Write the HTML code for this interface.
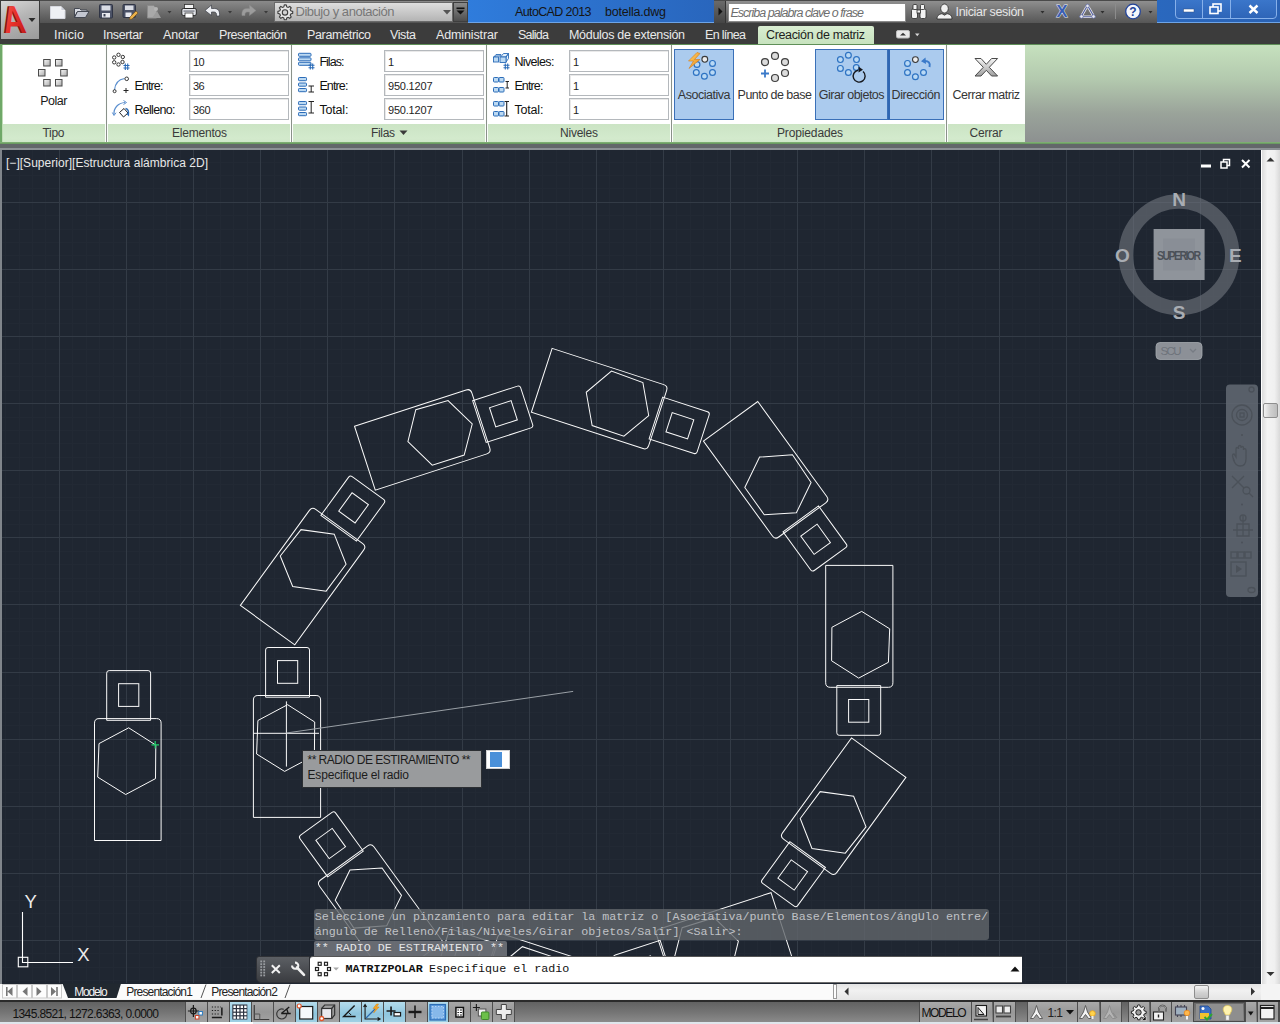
<!DOCTYPE html>
<html lang="es"><head><meta charset="utf-8"><title>AutoCAD 2013 botella.dwg</title>
<style>
html,body{margin:0;padding:0}
body{width:1280px;height:1024px;overflow:hidden;position:relative;background:#6d6f70;font-family:"Liberation Sans",sans-serif;font-size:12px;color:#222}
.abs{position:absolute}

</style></head>
<body>
<svg id="dw" width="1280" height="1024" viewBox="0 0 1280 1024" style="position:absolute;left:0;top:0"><defs><clipPath id="cp"><rect x="2" y="150" width="1259" height="833"/></clipPath></defs><rect x="0" y="150" width="1262" height="834" fill="#1f2631"/><rect x="0" y="150" width="2" height="850" fill="#80858b"/><g clip-path="url(#cp)"><path d="M5.60 150V984M19.02 150V984M32.45 150V984M45.87 150V984M72.73 150V984M86.15 150V984M99.58 150V984M113.00 150V984M139.86 150V984M153.28 150V984M166.71 150V984M180.13 150V984M206.99 150V984M220.41 150V984M233.84 150V984M247.26 150V984M274.12 150V984M287.54 150V984M300.97 150V984M314.39 150V984M341.25 150V984M354.67 150V984M368.10 150V984M381.52 150V984M408.38 150V984M421.80 150V984M435.23 150V984M448.65 150V984M475.51 150V984M488.93 150V984M502.36 150V984M515.78 150V984M542.64 150V984M556.06 150V984M569.49 150V984M582.91 150V984M609.77 150V984M623.19 150V984M636.62 150V984M650.04 150V984M676.90 150V984M690.32 150V984M703.75 150V984M717.17 150V984M744.03 150V984M757.45 150V984M770.88 150V984M784.30 150V984M811.16 150V984M824.58 150V984M838.01 150V984M851.43 150V984M878.29 150V984M891.71 150V984M905.14 150V984M918.56 150V984M945.42 150V984M958.84 150V984M972.27 150V984M985.69 150V984M1012.55 150V984M1025.97 150V984M1039.40 150V984M1052.82 150V984M1079.68 150V984M1093.10 150V984M1106.53 150V984M1119.95 150V984M1146.81 150V984M1160.23 150V984M1173.66 150V984M1187.08 150V984M1213.94 150V984M1227.36 150V984M1240.79 150V984M1254.21 150V984M0 162.04H1262M0 175.46H1262M0 188.88H1262M0 215.72H1262M0 229.14H1262M0 242.56H1262M0 255.98H1262M0 282.82H1262M0 296.24H1262M0 309.66H1262M0 323.08H1262M0 349.92H1262M0 363.34H1262M0 376.76H1262M0 390.18H1262M0 417.02H1262M0 430.44H1262M0 443.86H1262M0 457.28H1262M0 484.12H1262M0 497.54H1262M0 510.96H1262M0 524.38H1262M0 551.22H1262M0 564.64H1262M0 578.06H1262M0 591.48H1262M0 618.32H1262M0 631.74H1262M0 645.16H1262M0 658.58H1262M0 685.42H1262M0 698.84H1262M0 712.26H1262M0 725.68H1262M0 752.52H1262M0 765.94H1262M0 779.36H1262M0 792.78H1262M0 819.62H1262M0 833.04H1262M0 846.46H1262M0 859.88H1262M0 886.72H1262M0 900.14H1262M0 913.56H1262M0 926.98H1262M0 953.82H1262M0 967.24H1262M0 980.66H1262" stroke="#222934" stroke-width="1" fill="none" shape-rendering="crispEdges"/><path d="M59.30 150V984M126.43 150V984M193.56 150V984M260.69 150V984M327.82 150V984M394.95 150V984M462.08 150V984M529.21 150V984M596.34 150V984M663.47 150V984M730.60 150V984M797.73 150V984M864.86 150V984M931.99 150V984M999.12 150V984M1066.25 150V984M1133.38 150V984M1200.51 150V984M0 202.30H1262M0 269.40H1262M0 336.50H1262M0 403.60H1262M0 470.70H1262M0 537.80H1262M0 604.90H1262M0 672.00H1262M0 739.10H1262M0 806.20H1262M0 873.30H1262M0 940.40H1262" stroke="#333b46" stroke-width="1" fill="none" shape-rendering="crispEdges"/><g fill="none" stroke="#fafafa" stroke-width="1"><path d="M94.5 840.5V723.1Q94.5 718.6 99 718.6H156.6Q161.1 718.6 161.1 723.1V840.5Z"/><path d="M106.7 720.3V673.1Q106.7 670.6 109.2 670.6H148.1Q150.6 670.6 150.6 673.1V720.3Z"/><rect x="118.6" y="683.7" width="20.2" height="22.7"/><polygon points="128.7,727.8 155.8,745.1 155.5,778.6 125.7,794.5 97.7,777.1 99,743.6"/><g transform="rotate(0 573.15 691.4)"><path d="M253.4 817.4V700Q253.4 695.5 257.9 695.5H316.1Q320.6 695.5 320.6 700V817.4Z"/><path d="M265.6 697.2V650Q265.6 647.5 268.1 647.5H307Q309.5 647.5 309.5 650V697.2Z"/><rect x="277.5" y="660.6" width="20.2" height="22.7"/><polygon points="287.6,704.7 314.7,722 314.4,755.5 284.6,771.4 256.6,754 257.9,720.5"/></g><g transform="rotate(36 573.15 691.4)"><path d="M253.4 817.4V700Q253.4 695.5 257.9 695.5H316.1Q320.6 695.5 320.6 700V817.4Z"/><path d="M265.6 697.2V650Q265.6 647.5 268.1 647.5H307Q309.5 647.5 309.5 650V697.2Z"/><rect x="277.5" y="660.6" width="20.2" height="22.7"/><polygon points="287.6,704.7 314.7,722 314.4,755.5 284.6,771.4 256.6,754 257.9,720.5"/></g><g transform="rotate(72 573.15 691.4)"><path d="M253.4 817.4V700Q253.4 695.5 257.9 695.5H316.1Q320.6 695.5 320.6 700V817.4Z"/><path d="M265.6 697.2V650Q265.6 647.5 268.1 647.5H307Q309.5 647.5 309.5 650V697.2Z"/><rect x="277.5" y="660.6" width="20.2" height="22.7"/><polygon points="287.6,704.7 314.7,722 314.4,755.5 284.6,771.4 256.6,754 257.9,720.5"/></g><g transform="rotate(108 573.15 691.4)"><path d="M253.4 817.4V700Q253.4 695.5 257.9 695.5H316.1Q320.6 695.5 320.6 700V817.4Z"/><path d="M265.6 697.2V650Q265.6 647.5 268.1 647.5H307Q309.5 647.5 309.5 650V697.2Z"/><rect x="277.5" y="660.6" width="20.2" height="22.7"/><polygon points="287.6,704.7 314.7,722 314.4,755.5 284.6,771.4 256.6,754 257.9,720.5"/></g><g transform="rotate(144 573.15 691.4)"><path d="M253.4 817.4V700Q253.4 695.5 257.9 695.5H316.1Q320.6 695.5 320.6 700V817.4Z"/><path d="M265.6 697.2V650Q265.6 647.5 268.1 647.5H307Q309.5 647.5 309.5 650V697.2Z"/><rect x="277.5" y="660.6" width="20.2" height="22.7"/><polygon points="287.6,704.7 314.7,722 314.4,755.5 284.6,771.4 256.6,754 257.9,720.5"/></g><g transform="rotate(180 573.15 691.4)"><path d="M253.4 817.4V700Q253.4 695.5 257.9 695.5H316.1Q320.6 695.5 320.6 700V817.4Z"/><path d="M265.6 697.2V650Q265.6 647.5 268.1 647.5H307Q309.5 647.5 309.5 650V697.2Z"/><rect x="277.5" y="660.6" width="20.2" height="22.7"/><polygon points="287.6,704.7 314.7,722 314.4,755.5 284.6,771.4 256.6,754 257.9,720.5"/></g><g transform="rotate(216 573.15 691.4)"><path d="M253.4 817.4V700Q253.4 695.5 257.9 695.5H316.1Q320.6 695.5 320.6 700V817.4Z"/><path d="M265.6 697.2V650Q265.6 647.5 268.1 647.5H307Q309.5 647.5 309.5 650V697.2Z"/><rect x="277.5" y="660.6" width="20.2" height="22.7"/><polygon points="287.6,704.7 314.7,722 314.4,755.5 284.6,771.4 256.6,754 257.9,720.5"/></g><g transform="rotate(252 573.15 691.4)"><path d="M253.4 817.4V700Q253.4 695.5 257.9 695.5H316.1Q320.6 695.5 320.6 700V817.4Z"/><path d="M265.6 697.2V650Q265.6 647.5 268.1 647.5H307Q309.5 647.5 309.5 650V697.2Z"/><rect x="277.5" y="660.6" width="20.2" height="22.7"/><polygon points="287.6,704.7 314.7,722 314.4,755.5 284.6,771.4 256.6,754 257.9,720.5"/></g><g transform="rotate(288 573.15 691.4)"><path d="M253.4 817.4V700Q253.4 695.5 257.9 695.5H316.1Q320.6 695.5 320.6 700V817.4Z"/><path d="M265.6 697.2V650Q265.6 647.5 268.1 647.5H307Q309.5 647.5 309.5 650V697.2Z"/><rect x="277.5" y="660.6" width="20.2" height="22.7"/><polygon points="287.6,704.7 314.7,722 314.4,755.5 284.6,771.4 256.6,754 257.9,720.5"/></g><g transform="rotate(324 573.15 691.4)"><path d="M253.4 817.4V700Q253.4 695.5 257.9 695.5H316.1Q320.6 695.5 320.6 700V817.4Z"/><path d="M265.6 697.2V650Q265.6 647.5 268.1 647.5H307Q309.5 647.5 309.5 650V697.2Z"/><rect x="277.5" y="660.6" width="20.2" height="22.7"/><polygon points="287.6,704.7 314.7,722 314.4,755.5 284.6,771.4 256.6,754 257.9,720.5"/></g><path d="M253.4 733.3H319M286.4 701.4V766.6"/></g><line x1="286.4" y1="733" x2="573.15" y2="691.4" stroke="#9aa0a6" stroke-width="1"/><path d="M151.5 744.8H159M155.2 741V748.6" stroke="#1fd06a" stroke-width="1.2"/><g fill="none" stroke="#fff" stroke-width="1.1"><path d="M22.5 912V962.5H73"/><rect x="18.3" y="957.3" width="9.5" height="9.5"/></g><g fill="#ececec" font-family="Liberation Sans,sans-serif" font-size="18.5"><text x="24.4" y="908.2">Y</text><text x="77.2" y="961.2">X</text></g></g></svg>
<div class="abs" style="left:0px;top:0px;width:1280px;height:23px;background:linear-gradient(#8a8a8a 0%,#707070 45%,#525252 100%);border-top:1px solid #4a4a4a;box-sizing:border-box"></div>
<div class="abs" style="left:0px;top:23px;width:1280px;height:21px;background:#3c3c3c"></div>
<div class="abs" style="left:468px;top:0px;width:246px;height:23px;background:linear-gradient(90deg,#2f7cdc,#2966bd);border-bottom:1px solid #6ea4e6;box-sizing:border-box"></div>
<div class="abs" style="left:1157px;top:0px;width:123px;height:23px;background:linear-gradient(90deg,#2a68be,#2a62b4);border-bottom:1px solid #6ea4e6;box-sizing:border-box"></div>
<div class="abs" style="left:515px;top:2px;height:20px;line-height:20px;font-size:12.5px;color:#151515;white-space:nowrap;letter-spacing:-0.626px;">AutoCAD 2013</div>
<div class="abs" style="left:605px;top:2px;height:20px;line-height:20px;font-size:12.5px;color:#151515;white-space:nowrap;letter-spacing:-0.224px;">botella.dwg</div>
<div class="abs" style="left:0px;top:0px;width:40px;height:40px;background:linear-gradient(160deg,#d6d6d6 0%,#b4b4b4 45%,#9a9a9a 100%);border:1px solid #3a3a3a;box-sizing:border-box"></div>
<svg class="abs" style="left:0;top:0" width="40" height="40" viewBox="0 0 40 40">
<defs><linearGradient id="ag" x1="0" y1="0" x2="1" y2="1"><stop offset="0" stop-color="#f66a5e"/><stop offset=".5" stop-color="#e8302a"/><stop offset="1" stop-color="#b41414"/></linearGradient></defs>
<g font-family="'Liberation Sans',sans-serif" font-weight="bold" font-size="39" transform="translate(4.8 32.5) skewX(9) scale(.8 1)"><text x="-2" y=".5" fill="#8a0e0f">A</text><text x="0" y="0" fill="url(#ag)">A</text></g>
<path d="M28.5 18h7l-3.5 4z" fill="#2b2b2b"/></svg>
<svg class="abs" style="left:44px;top:0" width="230" height="23" viewBox="44 0 230 23">
<g>
<path d="M50.5 6.5h10.5l4 4v8h-14.5z" fill="#eef0f4" stroke="#d5d7de" stroke-width="1"/><path d="M61 6.5v4h4" fill="#c9ccd6" stroke="#f8f8f8" stroke-width=".8"/>
<path d="M74.5 8.5h5l1.5 1.5h6v2h-10l-2.5 5.5z" fill="#d8dbe2" stroke="#3b3f4a" stroke-width=".9"/><path d="M74.5 17.5l3-6h11.5l-3.5 6z" fill="#c3c7d1" stroke="#3b3f4a" stroke-width=".9"/>
<rect x="99.5" y="4.5" width="13" height="13.5" rx="1" fill="#4b5266" stroke="#2f3444"/><rect x="101.5" y="5.5" width="9" height="5" fill="#d9dce4"/><rect x="102" y="13" width="8" height="4.5" fill="#e8eaf0"/><rect x="103.5" y="14" width="2" height="2.5" fill="#3c4254"/>
<rect x="123" y="4.5" width="12.5" height="13" rx="1" fill="#4b5266" stroke="#2f3444"/><rect x="125" y="5.5" width="8.5" height="4.5" fill="#d9dce4"/><rect x="125.5" y="12.5" width="6" height="4.5" fill="#e8eaf0"/><path d="M130 17l6-6 2 2-6 6-2.5.5z" fill="#e8b04a" stroke="#6b4a17" stroke-width=".6"/>
<path d="M147.5 5.5h6l3 3v9.5h-9z" fill="#a9a9a9" stroke="#8c8c8c"/><path d="M152 18l5-7 4 7z" fill="#9c9c9c"/><circle cx="156" cy="9" r="2" fill="#b5b5b5"/>
<path d="M167.5 11h4l-2 2.5z" fill="#3a3a3a"/>
<rect x="184.5" y="4.5" width="9" height="5" fill="#f4f4f4" stroke="#333" stroke-width=".8"/><rect x="181.8" y="8.5" width="14.5" height="7" rx="1.5" fill="#e3e5ea" stroke="#2b2b2b"/><rect x="185" y="13" width="8" height="5" fill="#fff" stroke="#333" stroke-width=".8"/><rect x="183.5" y="10.3" width="11" height="1.6" fill="#8a8d96"/>
<path d="M205 10.5l6.5-5.5v3.5h3c4 0 5.5 3 5 7.5h-3c.3-2.5-.5-4-2.5-4h-2.5v3.5z" fill="#eceef2" stroke="#3c3f48" stroke-width=".7"/>
<path d="M228 11h4l-2 2.5z" fill="#3a3a3a"/>
<path d="M256 10.5l-6.5-5.5v3.5h-3c-3.5 0-5 3-4.5 7h3c-.3-2.3.4-3.5 2.3-3.5h2.2v3.5z" fill="#9c9c9c" stroke="#8a8a8a" stroke-width=".5"/>
<path d="M264 11h4l-2 2.5z" fill="#3a3a3a"/>
</g></svg>
<div class="abs" style="left:273.5px;top:2px;width:179px;height:20px;background:linear-gradient(#dedede,#c9c9c9 50%,#b4b4b4);border:1px solid #6a6a6a;box-sizing:border-box"></div>
<svg class="abs" style="left:276px;top:3px" width="18" height="18" viewBox="0 0 18 18"><path d="M9 1.8l1.3.2.5 1.9 1.3.6 1.7-1 1.4 1.4-1 1.7.6 1.3 1.9.5v2l-1.9.5-.6 1.3 1 1.7-1.4 1.4-1.7-1-1.3.6-.5 1.9h-2l-.5-1.9-1.3-.6-1.7 1-1.4-1.4 1-1.7-.6-1.3-1.9-.5v-2l1.9-.5.6-1.3-1-1.7 1.4-1.4 1.7 1 1.3-.6.5-1.9z" fill="#e6e6e6" stroke="#3d3d3d" stroke-width="1.1"/><circle cx="9" cy="9.4" r="2.7" fill="#d2d2d2" stroke="#3d3d3d" stroke-width="1.1"/></svg>
<div class="abs" style="left:295.5px;top:2px;height:20px;line-height:20px;font-size:13px;color:#777;white-space:nowrap;letter-spacing:-0.468px;">Dibujo y anotación</div>
<svg class="abs" style="left:440px;top:8px" width="30" height="10" viewBox="0 0 30 10"><path d="M3 2h8l-4 4.5z" fill="#555"/></svg>
<div class="abs" style="left:453px;top:2px;width:14.5px;height:20px;background:linear-gradient(#8a8a8a,#4e4e4e);border:1px solid #3e3e3e;box-sizing:border-box"></div>
<svg class="abs" style="left:453px;top:2px" width="15" height="20" viewBox="0 0 15 20"><rect x="3.5" y="5.5" width="8" height="1.6" fill="#111"/><path d="M3.5 8.5h8l-4 4z" fill="#111"/></svg>
<div class="abs" style="left:714px;top:0px;width:443px;height:23px;background:linear-gradient(#8f8f8f 0%,#747474 45%,#565656 100%);border-top:1px solid #4a4a4a;box-sizing:border-box"></div>
<div class="abs" style="left:714px;top:1px;width:12px;height:22px;background:linear-gradient(#6a6a6a,#454545);border-right:1px solid #333;box-sizing:border-box"></div>
<svg class="abs" style="left:714px;top:0" width="12" height="23" viewBox="0 0 12 23"><path d="M4.5 7.5l4 4-4 4z" fill="#111"/></svg>
<div class="abs" style="left:727.5px;top:2.5px;width:178px;height:19.5px;background:#fff;border:1px solid #8a8a8a;box-sizing:border-box"></div>
<div class="abs" style="left:730.5px;top:2.8px;height:20px;line-height:20px;font-size:12.5px;color:#6e6e6e;white-space:nowrap;font-style:italic;letter-spacing:-0.989px;">Escriba palabra clave o frase</div>
<svg class="abs" style="left:908px;top:0" width="250" height="23" viewBox="908 0 250 23">
<g fill="#f2f2f2" stroke="#2a2a2a" stroke-width=".8"><rect x="911.5" y="9" width="6" height="9.5" rx="1.5"/><rect x="920" y="9" width="6" height="9.5" rx="1.5"/><rect x="913" y="4.5" width="4" height="5" rx="1"/><rect x="920.5" y="4.5" width="4" height="5" rx="1"/><rect x="917" y="10" width="3.5" height="3" /></g>
<g fill="#f0f0f0" stroke="#2a2a2a" stroke-width=".8"><ellipse cx="944.5" cy="8.5" rx="3.8" ry="4.5"/><path d="M937 19c0-4 3-5 5-5.3l2.5 1.5 2.5-1.5c2 .3 5 1.3 5 5.3z"/></g>
<path d="M1040.5 11h4l-2 2.5z" fill="#2e2e2e"/>
<text x="1056.5" y="17.3" font-family="'Liberation Sans',sans-serif" font-weight="bold" font-size="16.5" fill="#3a5fb4" stroke="#e8ecf6" stroke-width=".9" paint-order="stroke">X</text>
<path d="M1087.5 5.5l6.5 11.3h-13z" fill="none" stroke="#e9e9ee" stroke-width="2.6" stroke-linejoin="round"/><path d="M1087.5 5.5l6.5 11.3h-13z" fill="none" stroke="#5561a0" stroke-width="1.1" stroke-linejoin="round"/><circle cx="1087.5" cy="6" r="1.8" fill="#e9e9ee" stroke="#5561a0" stroke-width=".7"/><circle cx="1081.5" cy="16.5" r="1.8" fill="#e9e9ee" stroke="#5561a0" stroke-width=".7"/><circle cx="1093.5" cy="16.5" r="1.8" fill="#e9e9ee" stroke="#5561a0" stroke-width=".7"/>
<path d="M1100.5 11h4l-2 2.5z" fill="#2e2e2e"/>
<path d="M1115.5 4v15" stroke="#8c8c8c" stroke-width="1"/>
<circle cx="1133" cy="11.5" r="7.3" fill="#f4f6fb" stroke="#23449a" stroke-width="1.3"/>
<path d="M1148.5 11h4l-2 2.5z" fill="#2e2e2e"/>
</svg>
<div class="abs" style="left:1129.3px;top:1.8px;height:20px;line-height:20px;font-size:12px;color:#23449a;white-space:nowrap;font-weight:bold;">?</div>
<div class="abs" style="left:955.5px;top:2px;height:20px;line-height:20px;font-size:12.5px;color:#e6e6e6;white-space:nowrap;letter-spacing:-0.342px;">Iniciar sesión</div>
<div class="abs" style="left:1174.5px;top:-3px;width:102.5px;height:22px;border:1px solid #86b0ea;border-radius:0 0 4px 4px;box-sizing:border-box;background:linear-gradient(#3c78cc,#2e65b8)"></div>
<div class="abs" style="left:1202px;top:0px;width:1px;height:18px;background:#86b0ea"></div>
<div class="abs" style="left:1229.5px;top:0px;width:1px;height:18px;background:#86b0ea"></div>
<svg class="abs" style="left:1175px;top:0" width="102" height="20" viewBox="1175 0 102 20">
<rect x="1183.5" y="9" width="10.5" height="3" fill="#fff" stroke="#2d4f86" stroke-width=".5"/>
<rect x="1213" y="4" width="8" height="7" fill="none" stroke="#fff" stroke-width="1.6"/><rect x="1210" y="7" width="8" height="6.5" fill="#356ec2" stroke="#fff" stroke-width="1.6"/>
<path d="M1249.5 5.5l8 7.5M1257.5 5.5l-8 7.5" stroke="#fff" stroke-width="2.4"/>
</svg>
<div class="abs" style="left:54px;top:25.3px;height:20px;line-height:20px;font-size:12.5px;color:#eaeaea;white-space:nowrap;letter-spacing:0.164px;">Inicio</div>
<div class="abs" style="left:103px;top:25.3px;height:20px;line-height:20px;font-size:12.5px;color:#eaeaea;white-space:nowrap;letter-spacing:-0.34px;">Insertar</div>
<div class="abs" style="left:163px;top:25.3px;height:20px;line-height:20px;font-size:12.5px;color:#eaeaea;white-space:nowrap;letter-spacing:-0.166px;">Anotar</div>
<div class="abs" style="left:219px;top:25.3px;height:20px;line-height:20px;font-size:12.5px;color:#eaeaea;white-space:nowrap;letter-spacing:-0.451px;">Presentación</div>
<div class="abs" style="left:307px;top:25.3px;height:20px;line-height:20px;font-size:12.5px;color:#eaeaea;white-space:nowrap;letter-spacing:-0.338px;">Paramétrico</div>
<div class="abs" style="left:390px;top:25.3px;height:20px;line-height:20px;font-size:12.5px;color:#eaeaea;white-space:nowrap;letter-spacing:-0.391px;">Vista</div>
<div class="abs" style="left:436px;top:25.3px;height:20px;line-height:20px;font-size:12.5px;color:#eaeaea;white-space:nowrap;letter-spacing:-0.121px;">Administrar</div>
<div class="abs" style="left:518px;top:25.3px;height:20px;line-height:20px;font-size:12.5px;color:#eaeaea;white-space:nowrap;letter-spacing:-0.749px;">Salida</div>
<div class="abs" style="left:569px;top:25.3px;height:20px;line-height:20px;font-size:12.5px;color:#eaeaea;white-space:nowrap;letter-spacing:-0.295px;">Módulos de extensión</div>
<div class="abs" style="left:705px;top:25.3px;height:20px;line-height:20px;font-size:12.5px;color:#eaeaea;white-space:nowrap;letter-spacing:-0.695px;">En línea</div>
<div class="abs" style="left:758px;top:26px;width:116px;height:19px;background:linear-gradient(#d9edd2,#c6e2bd);border-radius:2px 2px 0 0"></div>
<div class="abs" style="left:766px;top:25.3px;height:20px;line-height:20px;font-size:12.5px;color:#1e1e1e;white-space:nowrap;letter-spacing:-0.347px;">Creación de matriz</div>
<svg class="abs" style="left:894px;top:26px" width="32" height="16" viewBox="0 0 32 16"><rect x="2.5" y="4.5" width="13" height="7.5" rx="1.5" fill="#e9e9e9" stroke="#bdbdbd"/><path d="M6 9.5l3-2.8 3 2.8z" fill="#333"/><path d="M21 7.5h4.5l-2.25 2.8z" fill="#d8d8d8"/></svg>
<div class="abs" style="left:0px;top:44px;width:1280px;height:100px;background:#bfdcb6"></div>
<div class="abs" style="left:0px;top:43.5px;width:1280px;height:1.5px;background:#5f8f58"></div>
<div class="abs" style="left:1025px;top:45px;width:255px;height:97.5px;background:linear-gradient(#c6e1be 0%,#b3c9ae 35%,#9aa39a 70%,#8c9090 100%)"></div>
<div class="abs" style="left:3px;top:45px;width:102.5px;height:79px;background:#fff"></div>
<div class="abs" style="left:3px;top:124px;width:102.5px;height:17.5px;background:linear-gradient(#cbe4c4,#d3eacd 80%,#cfe7c8)"></div>
<div class="abs" style="left:107px;top:45px;width:183.5px;height:79px;background:#fff"></div>
<div class="abs" style="left:107px;top:124px;width:183.5px;height:17.5px;background:linear-gradient(#cbe4c4,#d3eacd 80%,#cfe7c8)"></div>
<div class="abs" style="left:292px;top:45px;width:194px;height:79px;background:#fff"></div>
<div class="abs" style="left:292px;top:124px;width:194px;height:17.5px;background:linear-gradient(#cbe4c4,#d3eacd 80%,#cfe7c8)"></div>
<div class="abs" style="left:487.5px;top:45px;width:183.5px;height:79px;background:#fff"></div>
<div class="abs" style="left:487.5px;top:124px;width:183.5px;height:17.5px;background:linear-gradient(#cbe4c4,#d3eacd 80%,#cfe7c8)"></div>
<div class="abs" style="left:672.5px;top:45px;width:273.5px;height:79px;background:#fff"></div>
<div class="abs" style="left:672.5px;top:124px;width:273.5px;height:17.5px;background:linear-gradient(#cbe4c4,#d3eacd 80%,#cfe7c8)"></div>
<div class="abs" style="left:947.5px;top:45px;width:77px;height:79px;background:#fff"></div>
<div class="abs" style="left:947.5px;top:124px;width:77px;height:17.5px;background:linear-gradient(#cbe4c4,#d3eacd 80%,#cfe7c8)"></div>
<div class="abs" style="left:104.5px;top:45px;width:3px;height:96.5px;background:#fbfdfb"></div>
<div class="abs" style="left:105.5px;top:45px;width:1px;height:96.5px;background:#8a918a"></div>
<div class="abs" style="left:289.5px;top:45px;width:3px;height:96.5px;background:#fbfdfb"></div>
<div class="abs" style="left:290.5px;top:45px;width:1px;height:96.5px;background:#8a918a"></div>
<div class="abs" style="left:485px;top:45px;width:3px;height:96.5px;background:#fbfdfb"></div>
<div class="abs" style="left:486px;top:45px;width:1px;height:96.5px;background:#8a918a"></div>
<div class="abs" style="left:670px;top:45px;width:3px;height:96.5px;background:#fbfdfb"></div>
<div class="abs" style="left:671px;top:45px;width:1px;height:96.5px;background:#8a918a"></div>
<div class="abs" style="left:945px;top:45px;width:3px;height:96.5px;background:#fbfdfb"></div>
<div class="abs" style="left:946px;top:45px;width:1px;height:96.5px;background:#8a918a"></div>
<div class="abs" style="left:42.5px;top:122.5px;height:20px;line-height:20px;font-size:12px;color:#3a3a3a;white-space:nowrap;letter-spacing:-0.299px;">Tipo</div>
<div class="abs" style="left:172px;top:122.5px;height:20px;line-height:20px;font-size:12px;color:#3a3a3a;white-space:nowrap;letter-spacing:-0.212px;">Elementos</div>
<div class="abs" style="left:371px;top:122.5px;height:20px;line-height:20px;font-size:12px;color:#3a3a3a;white-space:nowrap;letter-spacing:-0.334px;">Filas</div>
<svg class="abs" style="left:398px;top:128px" width="12" height="10" viewBox="0 0 12 10"><path d="M1.5 2.5h8l-4 4.5z" fill="#3a3a3a"/></svg>
<div class="abs" style="left:560px;top:122.5px;height:20px;line-height:20px;font-size:12px;color:#3a3a3a;white-space:nowrap;letter-spacing:-0.224px;">Niveles</div>
<div class="abs" style="left:777px;top:122.5px;height:20px;line-height:20px;font-size:12px;color:#3a3a3a;white-space:nowrap;letter-spacing:-0.138px;">Propiedades</div>
<div class="abs" style="left:969.5px;top:122.5px;height:20px;line-height:20px;font-size:12px;color:#3a3a3a;white-space:nowrap;letter-spacing:-0.201px;">Cerrar</div>
<svg class="abs" style="left:30px;top:50px" width="50" height="45" viewBox="30 50 50 45"><defs><linearGradient id="sqg" x1="0" y1="0" x2="1" y2="1"><stop offset="0" stop-color="#fafafa"/><stop offset="1" stop-color="#a8a8a8"/></linearGradient></defs><rect x="43.7" y="59.5" width="6.5" height="6.5" fill="url(#sqg)" stroke="#4a4a4a" stroke-width="1"/><rect x="55.5" y="59.5" width="6.5" height="6.5" fill="url(#sqg)" stroke="#4a4a4a" stroke-width="1"/><rect x="38.5" y="69.5" width="6.5" height="6.5" fill="url(#sqg)" stroke="#4a4a4a" stroke-width="1"/><rect x="60.7" y="69.5" width="6.5" height="6.5" fill="url(#sqg)" stroke="#4a4a4a" stroke-width="1"/><rect x="43.7" y="79.5" width="6.5" height="6.5" fill="url(#sqg)" stroke="#4a4a4a" stroke-width="1"/><rect x="55.5" y="79.5" width="6.5" height="6.5" fill="url(#sqg)" stroke="#4a4a4a" stroke-width="1"/></svg>
<div class="abs" style="left:40.3px;top:90.5px;height:20px;line-height:20px;font-size:12.5px;color:#1a1a1a;white-space:nowrap;letter-spacing:-0.545px;">Polar</div>
<div class="abs" style="left:189px;top:50px;width:99.5px;height:21.6px;background:#fff;border:1px solid #b4b8bc;box-sizing:border-box;box-shadow:inset 1px 1px 0 #e9e9e9"></div><div class="abs" style="left:193px;top:51.9px;height:20px;line-height:20px;font-size:11px;color:#1e1e1e;white-space:nowrap;letter-spacing:-0.734px;">10</div>
<div class="abs" style="left:189px;top:74px;width:99.5px;height:21.6px;background:#fff;border:1px solid #b4b8bc;box-sizing:border-box;box-shadow:inset 1px 1px 0 #e9e9e9"></div><div class="abs" style="left:193px;top:75.9px;height:20px;line-height:20px;font-size:11px;color:#1e1e1e;white-space:nowrap;letter-spacing:-0.734px;">36</div>
<div class="abs" style="left:189px;top:98px;width:99.5px;height:21.6px;background:#fff;border:1px solid #b4b8bc;box-sizing:border-box;box-shadow:inset 1px 1px 0 #e9e9e9"></div><div class="abs" style="left:193px;top:99.9px;height:20px;line-height:20px;font-size:11px;color:#1e1e1e;white-space:nowrap;letter-spacing:-0.426px;">360</div>
<div class="abs" style="left:384px;top:50px;width:99.5px;height:21.6px;background:#fff;border:1px solid #b4b8bc;box-sizing:border-box;box-shadow:inset 1px 1px 0 #e9e9e9"></div><div class="abs" style="left:388px;top:51.9px;height:20px;line-height:20px;font-size:11px;color:#1e1e1e;white-space:nowrap;">1</div>
<div class="abs" style="left:384px;top:74px;width:99.5px;height:21.6px;background:#fff;border:1px solid #b4b8bc;box-sizing:border-box;box-shadow:inset 1px 1px 0 #e9e9e9"></div><div class="abs" style="left:388px;top:75.9px;height:20px;line-height:20px;font-size:11px;color:#1e1e1e;white-space:nowrap;letter-spacing:-0.197px;">950.1207</div>
<div class="abs" style="left:384px;top:98px;width:99.5px;height:21.6px;background:#fff;border:1px solid #b4b8bc;box-sizing:border-box;box-shadow:inset 1px 1px 0 #e9e9e9"></div><div class="abs" style="left:388px;top:99.9px;height:20px;line-height:20px;font-size:11px;color:#1e1e1e;white-space:nowrap;letter-spacing:-0.197px;">950.1207</div>
<div class="abs" style="left:569px;top:50px;width:99.5px;height:21.6px;background:#fff;border:1px solid #b4b8bc;box-sizing:border-box;box-shadow:inset 1px 1px 0 #e9e9e9"></div><div class="abs" style="left:573px;top:51.9px;height:20px;line-height:20px;font-size:11px;color:#1e1e1e;white-space:nowrap;">1</div>
<div class="abs" style="left:569px;top:74px;width:99.5px;height:21.6px;background:#fff;border:1px solid #b4b8bc;box-sizing:border-box;box-shadow:inset 1px 1px 0 #e9e9e9"></div><div class="abs" style="left:573px;top:75.9px;height:20px;line-height:20px;font-size:11px;color:#1e1e1e;white-space:nowrap;">1</div>
<div class="abs" style="left:569px;top:98px;width:99.5px;height:21.6px;background:#fff;border:1px solid #b4b8bc;box-sizing:border-box;box-shadow:inset 1px 1px 0 #e9e9e9"></div><div class="abs" style="left:573px;top:99.9px;height:20px;line-height:20px;font-size:11px;color:#1e1e1e;white-space:nowrap;">1</div>
<div class="abs" style="left:134.4px;top:75.8px;height:20px;line-height:20px;font-size:12.5px;color:#111;white-space:nowrap;letter-spacing:-0.87px;">Entre:</div>
<div class="abs" style="left:134.4px;top:99.8px;height:20px;line-height:20px;font-size:12.5px;color:#111;white-space:nowrap;letter-spacing:-0.694px;">Relleno:</div>
<div class="abs" style="left:319.4px;top:51.6px;height:20px;line-height:20px;font-size:12.5px;color:#111;white-space:nowrap;letter-spacing:-0.973px;">Filas:</div>
<div class="abs" style="left:319.4px;top:75.8px;height:20px;line-height:20px;font-size:12.5px;color:#111;white-space:nowrap;letter-spacing:-0.87px;">Entre:</div>
<div class="abs" style="left:319.4px;top:99.8px;height:20px;line-height:20px;font-size:12.5px;color:#111;white-space:nowrap;letter-spacing:-0.175px;">Total:</div>
<div class="abs" style="left:514.4px;top:51.6px;height:20px;line-height:20px;font-size:12.5px;color:#111;white-space:nowrap;letter-spacing:-0.637px;">Niveles:</div>
<div class="abs" style="left:514.4px;top:75.8px;height:20px;line-height:20px;font-size:12.5px;color:#111;white-space:nowrap;letter-spacing:-0.87px;">Entre:</div>
<div class="abs" style="left:514.4px;top:99.8px;height:20px;line-height:20px;font-size:12.5px;color:#111;white-space:nowrap;letter-spacing:-0.175px;">Total:</div>
<svg class="abs" style="left:108px;top:48px" width="26" height="74" viewBox="108 48 26 74"><circle cx="114.2" cy="57.5" r="1.7" fill="#fff" stroke="#222" stroke-width="0.9"/><circle cx="118.5" cy="54.8" r="1.7" fill="#fff" stroke="#222" stroke-width="0.9"/><circle cx="122.8" cy="57" r="1.7" fill="#fff" stroke="#222" stroke-width="0.9"/><circle cx="114.2" cy="62.3" r="1.7" fill="#fff" stroke="#222" stroke-width="0.9"/><circle cx="118.5" cy="64.5" r="1.7" fill="#fff" stroke="#222" stroke-width="0.9"/><circle cx="122.5" cy="62" r="1.7" fill="#fff" stroke="#222" stroke-width="0.9"/><path d="M123.5 65.5h6M123.5 68h6M125.3 63.5v6.5M127.7 63.5v6.5" stroke="#2b6cb8" stroke-width="1.1" fill="none"/><path d="M114.5 90c.500-6 4-10.5 10-11.5" stroke="#5b8fcf" stroke-width="1.2" fill="none"/><circle cx="126.7" cy="78.8" r="1.8" fill="#fff" stroke="#222" stroke-width=".9"/><circle cx="114.6" cy="91.2" r="1.5" fill="#fff" stroke="#222" stroke-width=".9"/><path d="M123.5 90.5h5M126 88v5" stroke="#222" stroke-width="1"/><path d="M114 114.5c-.500-6.5 4-11.5 11-12" stroke="#5b8fcf" stroke-width="1.2" fill="none"/><path d="M123.5 100.5l3 2-3 2M112.3 112.5l1.7 3 2-2.8" stroke="#5b8fcf" stroke-width="1" fill="none"/><path d="M119.5 112.5l4.5-4 4 4.5-4.5 4z" fill="#fff" stroke="#222" stroke-width="1"/><path d="M125.5 108.5c2.5.50 3.5 3 3 6.5l-1.5-1.5" fill="none" stroke="#2b6cb8" stroke-width="1.3"/></svg>
<svg class="abs" style="left:296px;top:48px" width="22" height="74" viewBox="296 48 22 74"><rect x="298.5" y="53.3" width="12.5" height="3" rx=".800" fill="#bcd9f2" stroke="#2b6cb8" stroke-width="1"/><rect x="298.5" y="57.8" width="12.5" height="3" rx=".800" fill="#bcd9f2" stroke="#2b6cb8" stroke-width="1"/><rect x="298.5" y="62.3" width="12.5" height="3" rx=".800" fill="#bcd9f2" stroke="#2b6cb8" stroke-width="1"/><path d="M308.5 65.3h6M308.5 67.8h6M310.3 63.5v6M312.7 63.5v6" stroke="#2b6cb8" stroke-width="1.1" fill="none"/><rect x="298.5" y="77.5" width="8" height="3.2" rx=".800" fill="#bcd9f2" stroke="#2b6cb8" stroke-width="1"/><rect x="298.5" y="83" width="8" height="3.2" rx=".800" fill="#bcd9f2" stroke="#2b6cb8" stroke-width="1"/><rect x="298.5" y="88.5" width="8" height="3.2" rx=".800" fill="#bcd9f2" stroke="#2b6cb8" stroke-width="1"/><path d="M308.5 86h5.5M308.5 92h5.5M311.2 86v6" stroke="#222" stroke-width="1" fill="none"/><rect x="298.5" y="101.5" width="8" height="3.2" rx=".800" fill="#bcd9f2" stroke="#2b6cb8" stroke-width="1"/><rect x="298.5" y="107" width="8" height="3.2" rx=".800" fill="#bcd9f2" stroke="#2b6cb8" stroke-width="1"/><rect x="298.5" y="112.5" width="8" height="3.2" rx=".800" fill="#bcd9f2" stroke="#2b6cb8" stroke-width="1"/><path d="M308.5 101.5h5.5M308.5 113h5.5M311.2 101.5v11.5" stroke="#222" stroke-width="1" fill="none"/></svg>
<svg class="abs" style="left:490px;top:48px" width="24" height="74" viewBox="490 48 24 74"><path d="M493.5 57.5l2.5-3h5l-1 1.5h-4z" fill="#e4f0fb" stroke="#2b6cb8" stroke-width=".9"/><rect x="493.5" y="57" width="5" height="5" fill="#bcd9f2" stroke="#2b6cb8" stroke-width=".9"/><path d="M500.5 57l3-3.5h5l-2.5 3.5zM506 57l2.5-3.5v5l-2.5 3.5z" fill="#e4f0fb" stroke="#2b6cb8" stroke-width=".9"/><rect x="500" y="57" width="6" height="5.5" fill="#bcd9f2" stroke="#2b6cb8" stroke-width=".9"/><path d="M503.5 65.3h6M503.5 67.8h6M505.3 63.5v6M507.7 63.5v6" stroke="#2b6cb8" stroke-width="1.1" fill="none"/><rect x="493.5" y="77.5" width="5" height="4.5" rx=".800" fill="#bcd9f2" stroke="#2b6cb8" stroke-width="1"/><rect x="499" y="77.5" width="5" height="4.5" rx=".800" fill="#bcd9f2" stroke="#2b6cb8" stroke-width="1"/><rect x="493.5" y="87.5" width="5" height="4.5" rx=".800" fill="#bcd9f2" stroke="#2b6cb8" stroke-width="1"/><rect x="499" y="87.5" width="5" height="4.5" rx=".800" fill="#bcd9f2" stroke="#2b6cb8" stroke-width="1"/><rect x="493.5" y="101.5" width="5" height="4.5" rx=".800" fill="#bcd9f2" stroke="#2b6cb8" stroke-width="1"/><rect x="499" y="101.5" width="5" height="4.5" rx=".800" fill="#bcd9f2" stroke="#2b6cb8" stroke-width="1"/><rect x="493.5" y="111.5" width="5" height="4.5" rx=".800" fill="#bcd9f2" stroke="#2b6cb8" stroke-width="1"/><rect x="499" y="111.5" width="5" height="4.5" rx=".800" fill="#bcd9f2" stroke="#2b6cb8" stroke-width="1"/><path d="M505.5 81.5h3.5M505.5 88h3.5M507.2 81.5v6.5" stroke="#222" stroke-width="1" fill="none"/><path d="M504.5 101.5h4.5M504.5 116h4.5M506.7 101.5v14.5" stroke="#222" stroke-width="1.1" fill="none"/></svg>
<div class="abs" style="left:674.4px;top:49.3px;width:59.4px;height:71px;background:#abcbee;border:1px solid #3a70b8;box-sizing:border-box"></div>
<div class="abs" style="left:815.3px;top:49.3px;width:73px;height:71px;background:#abcbee;border:1px solid #3a70b8;box-sizing:border-box"></div>
<div class="abs" style="left:887.5px;top:49.3px;width:56.3px;height:71px;background:#abcbee;border:1px solid #3a70b8;box-sizing:border-box;border-left:2px solid #2f66b2"></div>
<div class="abs" style="left:677.8px;top:84.6px;height:20px;line-height:20px;font-size:12.5px;color:#353535;white-space:nowrap;letter-spacing:-0.485px;">Asociativa</div>
<div class="abs" style="left:737.6px;top:84.6px;height:20px;line-height:20px;font-size:12.5px;color:#353535;white-space:nowrap;letter-spacing:-0.527px;">Punto de base</div>
<div class="abs" style="left:818.8px;top:84.6px;height:20px;line-height:20px;font-size:12.5px;color:#353535;white-space:nowrap;letter-spacing:-0.48px;">Girar objetos</div>
<div class="abs" style="left:891.5px;top:84.6px;height:20px;line-height:20px;font-size:12.5px;color:#353535;white-space:nowrap;letter-spacing:-0.387px;">Dirección</div>
<div class="abs" style="left:952.5px;top:84.6px;height:20px;line-height:20px;font-size:12.5px;color:#353535;white-space:nowrap;letter-spacing:-0.451px;">Cerrar matriz</div>
<svg class="abs" style="left:680px;top:48px" width="330" height="40" viewBox="680 48 330 40"><defs><linearGradient id="bolt" x1="0" y1="0" x2="1" y2="1"><stop offset="0" stop-color="#ffd86a"/><stop offset="1" stop-color="#e8861a"/></linearGradient><linearGradient id="xg" x1="0" y1="0" x2="0" y2="1"><stop offset="0" stop-color="#f6f6f6"/><stop offset="1" stop-color="#9f9f9f"/></linearGradient></defs><circle cx="712.5" cy="63.4" r="2.9" fill="#b9d9f5" stroke="#2d72c2" stroke-width="1.2"/><circle cx="712.5" cy="72.5" r="2.9" fill="#b9d9f5" stroke="#2d72c2" stroke-width="1.2"/><circle cx="704.4" cy="76.3" r="2.9" fill="#b9d9f5" stroke="#2d72c2" stroke-width="1.2"/><circle cx="696.3" cy="72.5" r="2.9" fill="#b9d9f5" stroke="#2d72c2" stroke-width="1.2"/><circle cx="697" cy="64.5" r="2.9" fill="#b9d9f5" stroke="#2d72c2" stroke-width="1.2"/><circle cx="704.8" cy="59.3" r="2.9" fill="#ececec" stroke="#3a3a3a" stroke-width="1.1"/><path d="M697 52.5l-8.5 8.5h5l-4.5 7.5 11-9h-5.5l5.5-6z" fill="url(#bolt)" stroke="#d9780f" stroke-width=".6"/><circle cx="775" cy="55.9" r="3.5" fill="#dcdcdc" stroke="#3f3f3f" stroke-width="1.2"/><circle cx="785" cy="62.1" r="3.5" fill="#dcdcdc" stroke="#3f3f3f" stroke-width="1.2"/><circle cx="785" cy="73" r="3.5" fill="#dcdcdc" stroke="#3f3f3f" stroke-width="1.2"/><circle cx="775" cy="78" r="3.5" fill="#dcdcdc" stroke="#3f3f3f" stroke-width="1.2"/><circle cx="765" cy="62.1" r="3.5" fill="#dcdcdc" stroke="#3f3f3f" stroke-width="1.2"/><path d="M761 73.5h8M765 69.5v8" stroke="#3b7ac9" stroke-width="1.8" fill="none"/><circle cx="848.4" cy="55.3" r="2.9" fill="#b9d9f5" stroke="#2d72c2" stroke-width="1.2"/><circle cx="856.5" cy="59.6" r="2.9" fill="#b9d9f5" stroke="#2d72c2" stroke-width="1.2"/><circle cx="856.3" cy="67.5" r="2.9" fill="#b9d9f5" stroke="#2d72c2" stroke-width="1.2"/><circle cx="848.4" cy="72.5" r="2.9" fill="#b9d9f5" stroke="#2d72c2" stroke-width="1.2"/><circle cx="840.4" cy="68.4" r="2.9" fill="#b9d9f5" stroke="#2d72c2" stroke-width="1.2"/><circle cx="840.4" cy="59.6" r="2.9" fill="#b9d9f5" stroke="#2d72c2" stroke-width="1.2"/><path d="M858 70.2a6 6 0 1 0 5 1.3" fill="none" stroke="#15171c" stroke-width="1.4"/><path d="M858.5 66.5l4.5 3.3-4.5 2.7z" fill="#15171c"/><circle cx="907.5" cy="63.4" r="2.9" fill="#b9d9f5" stroke="#2d72c2" stroke-width="1.2"/><circle cx="907.5" cy="72.5" r="2.9" fill="#b9d9f5" stroke="#2d72c2" stroke-width="1.2"/><circle cx="915.4" cy="76.8" r="2.9" fill="#b9d9f5" stroke="#2d72c2" stroke-width="1.2"/><circle cx="923.5" cy="72.5" r="2.9" fill="#b9d9f5" stroke="#2d72c2" stroke-width="1.2"/><circle cx="915.4" cy="59.6" r="2.9" fill="#ececec" stroke="#3a3a3a" stroke-width="1.1"/><path d="M929.5 67c1.2-4-1-6.5-5.5-6" fill="none" stroke="#3b7ac9" stroke-width="2"/><path d="M925.5 57.5l-4.5 3.8 5 2.7z" fill="#3b7ac9"/><path d="M975 58.5h6l5.3 5.8 5.3-5.8h6l-8.3 8.8 8.3 8.7h-6l-5.3-5.7-5.3 5.7h-6l8.3-8.7z" fill="url(#xg)" stroke="#4a4a4a" stroke-width="1"/></svg>
<div class="abs" style="left:0px;top:141.5px;width:1280px;height:2.6px;background:linear-gradient(#86b679,#62935a)"></div>
<div class="abs" style="left:0px;top:144.1px;width:1280px;height:3.8px;background:#63676a"></div>
<div class="abs" style="left:0px;top:147.9px;width:1280px;height:2.1px;background:#8c9195"></div>
<div class="abs" style="left:0px;top:44px;width:2px;height:98px;background:#6fa868"></div>
<div class="abs" style="left:6px;top:152.5px;height:20px;line-height:20px;font-size:12px;color:#e8e8e8;white-space:nowrap;letter-spacing:0.025px;">[−][Superior][Estructura alámbrica 2D]</div>
<svg class="abs" style="left:1195px;top:155px" width="62" height="18" viewBox="1195 155 62 18">
<rect x="1201" y="164.5" width="10" height="3" fill="#fff"/>
<rect x="1223.5" y="159.5" width="6" height="6" fill="none" stroke="#fff" stroke-width="1.5"/><rect x="1221" y="162" width="6" height="6" fill="#212830" stroke="#fff" stroke-width="1.5"/>
<path d="M1242 160l7.5 7.5M1249.5 160l-7.5 7.5" stroke="#fff" stroke-width="2"/></svg>
<svg class="abs" style="left:1100px;top:180px" width="160" height="190" viewBox="1100 180 160 190">
<circle cx="1179" cy="254.7" r="53.2" fill="none" stroke="#737981" stroke-opacity=".58" stroke-width="14.4"/>
<rect x="1153.6" y="229" width="51" height="51" fill="#8f949b"/>
<rect x="1163" y="238.5" width="32" height="32" fill="#898e96"/>
<rect x="1156" y="342.5" width="46" height="17" rx="4" fill="#8c9097" stroke="#a5a9af" stroke-width=".8"/>
<path d="M1190 349l3 3 3-3" fill="none" stroke="#777c84" stroke-width="1.3"/>
</svg>
<div class="abs" style="left:1172.2px;top:190px;height:20px;line-height:20px;font-size:19px;color:#a9adb3;white-space:nowrap;font-weight:bold;">N</div>
<div class="abs" style="left:1172.7px;top:303px;height:20px;line-height:20px;font-size:19px;color:#a9adb3;white-space:nowrap;font-weight:bold;">S</div>
<div class="abs" style="left:1115px;top:245.5px;height:20px;line-height:20px;font-size:19px;color:#a9adb3;white-space:nowrap;font-weight:bold;">O</div>
<div class="abs" style="left:1229px;top:245.5px;height:20px;line-height:20px;font-size:19px;color:#a9adb3;white-space:nowrap;font-weight:bold;">E</div>
<div class="abs" style="left:1157px;top:244.5px;height:20px;line-height:20px;font-size:10.5px;color:#4b5058;white-space:nowrap;font-weight:bold;letter-spacing:-1.549px;transform:scaleY(1.25);">SUPERIOR</div>
<div class="abs" style="left:1160.5px;top:341px;height:20px;line-height:20px;font-size:11.5px;color:#6e737b;white-space:nowrap;letter-spacing:-1.64px;">SCU</div>
<svg class="abs" style="left:1222px;top:380px" width="40" height="222" viewBox="1222 380 40 222">
<rect x="1226" y="384.6" width="32" height="212.4" rx="4" fill="#626972" fill-opacity=".86"/>
<g fill="none" stroke="#4b5159" stroke-width="1.3">
<circle cx="1242" cy="415" r="10"/><circle cx="1242" cy="415" r="5.5"/><rect x="1240" y="413" width="4" height="4"/>
<path d="M1234 460c-2-4-2-6 0-6l2 3v-8c0-2 2.5-2 2.5 0v-2c0-2 2.5-2 2.5 0v1c0-2 2.5-2 2.5 0v2c0-2 2.5-1.5 2.5 0v9c0 5-3 7-6 7s-5-2-6.5-6z"/>
<path d="M1232 476l12 12M1244 476l-12 12"/><circle cx="1246.5" cy="490.5" r="3.5"/><path d="M1249 493l4 4"/>
<path d="M1233 530h20M1243 516v20M1237 524h12v12h-12z"/><circle cx="1243" cy="518" r="3"/>
<rect x="1231" y="552" width="6" height="6"/><rect x="1238" y="552" width="6" height="6"/><rect x="1245" y="552" width="6" height="6"/><rect x="1231" y="562" width="15" height="14"/>
<circle cx="1251.5" cy="389.5" r="2.5"/><ellipse cx="1251.5" cy="590" rx="3.5" ry="2.5"/>
</g>
<path d="M1236 565l6 4-6 4z" fill="#4b5159"/>
<circle cx="1242" cy="435" r="1" fill="#4b5159"/><circle cx="1242" cy="504.5" r="1" fill="#4b5159"/><circle cx="1242" cy="542.5" r="1" fill="#4b5159"/>
</svg>
<div class="abs" style="left:302.4px;top:750.3px;width:179.5px;height:37.6px;background:#999b9d;border:1px solid #2c2f33;box-sizing:border-box"></div>
<div class="abs" style="left:307.5px;top:749.5px;height:20px;line-height:20px;font-size:12px;color:#1c1c1c;white-space:nowrap;letter-spacing:-0.519px;">** RADIO DE ESTIRAMIENTO **</div>
<div class="abs" style="left:307.5px;top:765px;height:20px;line-height:20px;font-size:12px;color:#1c1c1c;white-space:nowrap;letter-spacing:-0.17px;">Especifique el radio</div>
<div class="abs" style="left:485.8px;top:750.3px;width:24.7px;height:19.2px;background:#fff;border:1px solid #d0d0d0;box-sizing:border-box"></div>
<div class="abs" style="left:489.7px;top:752.2px;width:12.3px;height:14.5px;background:#4a90d9"></div>
<div class="abs" style="left:314px;top:909px;width:674.5px;height:30.5px;background:rgba(98,102,108,.8);border-radius:3px"></div>
<div class="abs" style="left:314px;top:940.5px;width:192.5px;height:15px;background:rgba(108,112,118,.94);border-radius:2px 2px 0 0"></div>
<div class="abs" style="left:314.7px;top:907.2px;height:20px;line-height:20px;font-size:11.7px;color:#c0c2c6;white-space:nowrap;font-family:'Liberation Mono',monospace;">Seleccione un pinzamiento para editar la matriz o [Asociativa/punto Base/Elementos/ángUlo entre/</div>
<div class="abs" style="left:314.7px;top:922.2px;height:20px;line-height:20px;font-size:11.7px;color:#c0c2c6;white-space:nowrap;font-family:'Liberation Mono',monospace;">ángulo de Relleno/Filas/Niveles/Girar objetos/Salir] &lt;Salir&gt;:</div>
<div class="abs" style="left:314.7px;top:937.8px;height:20px;line-height:20px;font-size:11.7px;color:#e4e5e7;white-space:nowrap;font-family:'Liberation Mono',monospace;">** RADIO DE ESTIRAMIENTO **</div>
<div class="abs" style="left:256px;top:956px;width:54px;height:26.5px;background:linear-gradient(#5c5f64,#3a3c40);border-radius:3px 0 0 5px;border:1px solid #2f3136;box-sizing:border-box"></div>
<div class="abs" style="left:310px;top:956px;width:712px;height:27.3px;background:#fff;border-top:1px solid #555;border-bottom:1.3px solid #6c6c6c;border-radius:3px 0 0 0;box-sizing:border-box"></div>
<svg class="abs" style="left:256px;top:956px" width="90" height="28" viewBox="256 956 90 28">
<g fill="#9a9da1"><rect x="260.3" y="960.5" width="1.8" height="1.8"/><rect x="260.3" y="963.3" width="1.8" height="1.8"/><rect x="260.3" y="966.1" width="1.8" height="1.8"/><rect x="260.3" y="968.9" width="1.8" height="1.8"/><rect x="260.3" y="971.7" width="1.8" height="1.8"/><rect x="260.3" y="974.5" width="1.8" height="1.8"/><rect x="263.3" y="960.5" width="1.8" height="1.8"/><rect x="263.3" y="963.3" width="1.8" height="1.8"/><rect x="263.3" y="966.1" width="1.8" height="1.8"/><rect x="263.3" y="968.9" width="1.8" height="1.8"/><rect x="263.3" y="971.7" width="1.8" height="1.8"/><rect x="263.3" y="974.5" width="1.8" height="1.8"/></g>
<path d="M271.8 965.3l8 7.7M279.8 965.3l-8 7.7" stroke="#f2f2f2" stroke-width="2"/>
<path d="M297 967.5l7 7.3" stroke="#f0f0f0" stroke-width="2.6" stroke-linecap="round"/><path d="M295 962.6A3.1 3.1 0 1 1 292.1 965.5" fill="none" stroke="#f0f0f0" stroke-width="2.1"/>
<g fill="#fff" stroke="#222" stroke-width="1.2"><rect x="318.2" y="962.3" width="3" height="3"/><rect x="324.5" y="962.3" width="3" height="3"/><rect x="315.5" y="967.5" width="3" height="3"/><rect x="327.5" y="967.5" width="3" height="3"/><rect x="318.2" y="972.7" width="3" height="3"/><rect x="324.5" y="972.7" width="3" height="3"/></g>
<path d="M333.2 967.5h5.8l-2.9 3z" fill="#a8a8a8"/>
</svg>
<div class="abs" style="left:345.5px;top:958.7px;height:20px;line-height:20px;font-size:11.7px;color:#111;white-space:nowrap;font-weight:bold;font-family:'Liberation Mono',monospace;">MATRIZPOLAR</div>
<div class="abs" style="left:429px;top:958.7px;height:20px;line-height:20px;font-size:11.7px;color:#111;white-space:nowrap;font-family:'Liberation Mono',monospace;">Especifique el radio</div>
<svg class="abs" style="left:1008px;top:962px" width="14" height="14" viewBox="0 0 14 14"><path d="M2.5 9.5l4.5-5 4.5 5z" fill="#111"/></svg>
<div class="abs" style="left:1261px;top:150px;width:19px;height:833.5px;background:linear-gradient(90deg,#dcdcdc,#f4f4f4 30%,#f0f0f0 70%,#d9d9d9);border-left:1px solid #fff;box-sizing:border-box"></div>
<svg class="abs" style="left:1261px;top:150px" width="19" height="834" viewBox="0 0 19 834"><path d="M5.5 11.5l4-4 4 4z" fill="#333"/><path d="M5.5 822l4 4 4-4z" fill="#333"/></svg>
<div class="abs" style="left:1263px;top:403px;width:14.5px;height:14.5px;background:linear-gradient(90deg,#f2f2f2,#cfcfcf 50%,#bdbdbd);border:1px solid #8e8e8e;border-radius:2px;box-sizing:border-box"></div>
<div class="abs" style="left:0px;top:983.5px;width:1280px;height:16px;background:#f4f4f4"></div>
<div class="abs" style="left:0px;top:983.5px;width:834px;height:15.5px;background:#fbfbfb"></div>
<div class="abs" style="left:836px;top:983.5px;width:425px;height:16px;background:linear-gradient(#e3e3e3,#f1f1f1 40%,#e6e6e6)"></div>
<div class="abs" style="left:833px;top:984px;width:3.5px;height:15px;background:#fdfdfd;border:1px solid #9a9a9a;box-sizing:border-box"></div>
<div class="abs" style="left:1193.5px;top:984.5px;width:15.5px;height:14px;background:linear-gradient(#f4f4f4,#d2d2d2 55%,#c2c2c2);border:1px solid #8e8e8e;border-radius:2px;box-sizing:border-box"></div>
<svg class="abs" style="left:836px;top:984px" width="426" height="15" viewBox="836 984 426 15"><path d="M848.5 987.5l-4 4 4 4z" fill="#333"/><path d="M1251 987.5l4 4-4 4z" fill="#333"/></svg>
<svg class="abs" style="left:0;top:983px" width="300" height="17" viewBox="0 983 300 17"><rect x="2.5" y="984.5" width="14" height="13.5" fill="#fdfdfd" stroke="#c9c9c9" stroke-width="1"/><rect x="17.5" y="984.5" width="14" height="13.5" fill="#fdfdfd" stroke="#c9c9c9" stroke-width="1"/><rect x="32.5" y="984.5" width="14" height="13.5" fill="#fdfdfd" stroke="#c9c9c9" stroke-width="1"/><rect x="47.5" y="984.5" width="14" height="13.5" fill="#fdfdfd" stroke="#c9c9c9" stroke-width="1"/><g fill="#777"><path d="M12.5 987l-5 4.5 5 4.5zM6 987h1.6v9H6z"/><path d="M27.5 987l-5 4.5 5 4.5z"/><path d="M36.5 987l5 4.5-5 4.5z"/><path d="M51 987l5 4.5-5 4.5zM56.2 987h1.6v9h-1.6z"/></g><path d="M62.5 983.5h58.5l-4.5 14.5h-48.5z" fill="#212830"/><path d="M201 998l5-13.5M285 998l5-13.5" stroke="#555" stroke-width="1" fill="none"/></svg>
<div class="abs" style="left:74.2px;top:981.5px;height:20px;line-height:20px;font-size:12px;color:#f2f2f2;white-space:nowrap;letter-spacing:-1.171px;">Modelo</div>
<div class="abs" style="left:126.3px;top:981.5px;height:20px;line-height:20px;font-size:12px;color:#222;white-space:nowrap;letter-spacing:-0.851px;">Presentación1</div>
<div class="abs" style="left:211.3px;top:981.5px;height:20px;line-height:20px;font-size:12px;color:#222;white-space:nowrap;letter-spacing:-0.851px;">Presentación2</div>
<div class="abs" style="left:0px;top:1000.3px;width:1280px;height:1.4px;background:#2b2b2b"></div>
<div class="abs" style="left:0px;top:1001.5px;width:1280px;height:20.8px;background:linear-gradient(#626262,#747474 50%,#8a8a8a)"></div>
<div class="abs" style="left:0px;top:1022.3px;width:1280px;height:2px;background:#dfe6ec"></div>
<div class="abs" style="left:199.5px;top:1022.3px;width:53px;height:2px;background:#fff"></div>
<div class="abs" style="left:12.5px;top:1003.5px;height:20px;line-height:20px;font-size:12px;color:#111;white-space:nowrap;letter-spacing:-0.629px;">1345.8521, 1272.6363, 0.0000</div>
<div class="abs" style="left:184.9px;top:1001.5px;width:22px;height:20.8px;background:linear-gradient(#a6a6a6,#979797 50%,#a2a2a2);border-left:1px solid #4e4e4e;box-sizing:border-box"></div>
<div class="abs" style="left:206.9px;top:1001.5px;width:22px;height:20.8px;background:linear-gradient(#a6a6a6,#979797 50%,#a2a2a2);border-left:1px solid #4e4e4e;box-sizing:border-box"></div>
<div class="abs" style="left:228.8px;top:1001.5px;width:22px;height:20.8px;background:linear-gradient(#b4dcec,#8fc6de 60%,#9fd0e4);border-left:1px solid #4e4e4e;box-sizing:border-box"></div>
<div class="abs" style="left:250.8px;top:1001.5px;width:22px;height:20.8px;background:linear-gradient(#a6a6a6,#979797 50%,#a2a2a2);border-left:1px solid #4e4e4e;box-sizing:border-box"></div>
<div class="abs" style="left:272.7px;top:1001.5px;width:22px;height:20.8px;background:linear-gradient(#a6a6a6,#979797 50%,#a2a2a2);border-left:1px solid #4e4e4e;box-sizing:border-box"></div>
<div class="abs" style="left:294.7px;top:1001.5px;width:22px;height:20.8px;background:linear-gradient(#b4dcec,#8fc6de 60%,#9fd0e4);border-left:1px solid #4e4e4e;box-sizing:border-box"></div>
<div class="abs" style="left:316.7px;top:1001.5px;width:22px;height:20.8px;background:linear-gradient(#a6a6a6,#979797 50%,#a2a2a2);border-left:1px solid #4e4e4e;box-sizing:border-box"></div>
<div class="abs" style="left:338.6px;top:1001.5px;width:22px;height:20.8px;background:linear-gradient(#b4dcec,#8fc6de 60%,#9fd0e4);border-left:1px solid #4e4e4e;box-sizing:border-box"></div>
<div class="abs" style="left:360.6px;top:1001.5px;width:22px;height:20.8px;background:linear-gradient(#b4dcec,#8fc6de 60%,#9fd0e4);border-left:1px solid #4e4e4e;box-sizing:border-box"></div>
<div class="abs" style="left:382.5px;top:1001.5px;width:22px;height:20.8px;background:linear-gradient(#b4dcec,#8fc6de 60%,#9fd0e4);border-left:1px solid #4e4e4e;box-sizing:border-box"></div>
<div class="abs" style="left:404.5px;top:1001.5px;width:22px;height:20.8px;background:linear-gradient(#a6a6a6,#979797 50%,#a2a2a2);border-left:1px solid #4e4e4e;box-sizing:border-box"></div>
<div class="abs" style="left:426.5px;top:1001.5px;width:22px;height:20.8px;background:linear-gradient(#b4dcec,#8fc6de 60%,#9fd0e4);border-left:1px solid #4e4e4e;box-sizing:border-box"></div>
<div class="abs" style="left:448.4px;top:1001.5px;width:22px;height:20.8px;background:linear-gradient(#a6a6a6,#979797 50%,#a2a2a2);border-left:1px solid #4e4e4e;box-sizing:border-box"></div>
<div class="abs" style="left:470.4px;top:1001.5px;width:22px;height:20.8px;background:linear-gradient(#a6a6a6,#979797 50%,#a2a2a2);border-left:1px solid #4e4e4e;box-sizing:border-box"></div>
<div class="abs" style="left:492.3px;top:1001.5px;width:22px;height:20.8px;background:linear-gradient(#a6a6a6,#979797 50%,#a2a2a2);border-left:1px solid #4e4e4e;box-sizing:border-box"></div>
<div class="abs" style="left:514.3px;top:1001.5px;width:1px;height:20.8px;background:#4e4e4e"></div>
<svg class="abs" style="left:184px;top:1001.8px" width="332" height="21" viewBox="184 1001 332 21"><g fill="none" stroke="#1a1a1a" stroke-width="1.2"><path d="M187.9 1010h11M193.4 1004v12"/><circle cx="193.4" cy="1010" r="2.8"/><rect x="198.9" y="1010.5" width="3.5" height="3.5" fill="#fff" stroke="#2a7ac0" stroke-width="1"/><rect x="195.4" y="1014.5" width="3.5" height="3.5" fill="#fff" stroke="#d0452a" stroke-width="1"/><path d="M211.86 1006h9M211.86 1009.5h7M211.86 1013h7" stroke-dasharray="1.2 1.6"/><path d="M221.86 1006.5v8M211.86 1016.5h10" stroke-width="1.5"/><rect x="232.32" y="1003.5" width="15" height="15" fill="#2d3340" stroke="none"/><rect x="233.4" y="1004.6" width="2.4" height="2.4" fill="#fff" stroke="none"/><rect x="233.4" y="1008.2" width="2.4" height="2.4" fill="#fff" stroke="none"/><rect x="233.4" y="1011.8" width="2.4" height="2.4" fill="#fff" stroke="none"/><rect x="233.4" y="1015.4" width="2.4" height="2.4" fill="#fff" stroke="none"/><rect x="237" y="1004.6" width="2.4" height="2.4" fill="#fff" stroke="none"/><rect x="237" y="1008.2" width="2.4" height="2.4" fill="#fff" stroke="none"/><rect x="237" y="1011.8" width="2.4" height="2.4" fill="#fff" stroke="none"/><rect x="237" y="1015.4" width="2.4" height="2.4" fill="#fff" stroke="none"/><rect x="240.6" y="1004.6" width="2.4" height="2.4" fill="#fff" stroke="none"/><rect x="240.6" y="1008.2" width="2.4" height="2.4" fill="#fff" stroke="none"/><rect x="240.6" y="1011.8" width="2.4" height="2.4" fill="#fff" stroke="none"/><rect x="240.6" y="1015.4" width="2.4" height="2.4" fill="#fff" stroke="none"/><rect x="244.2" y="1004.6" width="2.4" height="2.4" fill="#fff" stroke="none"/><rect x="244.2" y="1008.2" width="2.4" height="2.4" fill="#fff" stroke="none"/><rect x="244.2" y="1011.8" width="2.4" height="2.4" fill="#fff" stroke="none"/><rect x="244.2" y="1015.4" width="2.4" height="2.4" fill="#fff" stroke="none"/><path d="M254.28 1004v14.5h15" stroke="#3a3a3a"/><path d="M254.28 1013h5.5v5.5" stroke="#555" stroke-width="1"/><path d="M286.74 1013a5 5 0 1 1-3-4.6" stroke="#3a3a3a"/><path d="M281.24 1012.5h9.5M281.24 1012.5l8-6.5M286.74 1008l1.5 4.5" stroke-width="1.3"/><rect x="299.70000000000005" y="1005.5" width="13" height="12.5" fill="#f4f8fb" stroke="#1a1a1a"/><circle cx="299.20000000000005" cy="1005" r="2" fill="#fff" stroke="#e2572b" stroke-width="1.2"/><path d="M321.65999999999997 1007.5l3-3.5h10v10l-3 3.5" stroke="#333"/><rect x="321.65999999999997" y="1007.5" width="10" height="10" fill="#e9e9ee" stroke="#333"/><path d="M331.65999999999997 1007.5l3-3.5" stroke="#333"/><circle cx="321.65999999999997" cy="1017.5" r="2" fill="#fff" stroke="#e2572b" stroke-width="1.3"/><path d="M354.62 1004.5l-11 11h12" stroke-width="1.4"/><path d="M348.62 1011.5l2.5 2.5" stroke-width="1"/><path d="M365.08000000000004 1003.5v14.5h15M363.58000000000004 1006l1.5-2.5 1.5 2.5M377.58000000000004 1016.5l2.5 1.5-2.5 1.5" stroke-width="1.1"/><path d="M366.08000000000004 1017l9-9" stroke="#2a6ab0"/><path d="M376.58000000000004 1003l-3.5 4.5h2.5l-2 4.5 5.5-6h-2.5l2-3z" fill="#f5a623" stroke="#d98210" stroke-width=".5"/><path d="M386.54 1010h9M391.04 1005.5v9" stroke-width="1.6"/><rect x="394.04" y="1011.5" width="6.5" height="3.5" fill="#fff" stroke-width="1.2"/><path d="M408.5 1011h13" stroke-width="2.4"/><path d="M415 1004.5v12.5" stroke-width="1.6"/><rect x="429.96000000000004" y="1003.5" width="15.5" height="15.5" fill="#5b9bdc" stroke="#2d6db5" stroke-width="1.2"/><rect x="431.96000000000004" y="1005.5" width="11.5" height="11.5" fill="#86b8ea" stroke="#c7defa" stroke-width=".8" stroke-dasharray="1.5 1.5"/><rect x="455.91999999999996" y="1006.5" width="7.5" height="9.5" fill="#fff" stroke="#111" stroke-width="1.5"/><path d="M457.41999999999996 1009h1.5M459.91999999999996 1009h2M457.41999999999996 1011.5h1.5M459.91999999999996 1011.5h2M457.41999999999996 1014h1.5M459.91999999999996 1014h2" stroke-width="1.1"/><path d="M472.88 1006.5h7M476.38 1003v7" stroke-width="1.1"/><rect x="478.38" y="1008" width="7.5" height="7" fill="#f2f2f2" stroke="#555" stroke-width="1"/><rect x="481.38" y="1011" width="7.5" height="7.5" rx="1" fill="#6cc04a" stroke="#3f8a2a" stroke-width="1"/><path d="M501.34000000000003 1003.5h5v5h5v5h-5v5h-5v-5h-5v-5h5z" fill="#eeeeee" stroke="#444" stroke-width="1"/></g></svg>
<div class="abs" style="left:918.8px;top:1001.5px;width:51.9px;height:20.8px;background:linear-gradient(#a9a9a9,#999 50%,#a4a4a4);border-left:1px solid #4e4e4e;box-sizing:border-box"></div>
<div class="abs" style="left:970.6px;top:1001.5px;width:21.9px;height:20.8px;background:linear-gradient(#a9a9a9,#999 50%,#a4a4a4);border-left:1px solid #4e4e4e;box-sizing:border-box"></div>
<div class="abs" style="left:992.5px;top:1001.5px;width:22.3px;height:20.8px;background:linear-gradient(#a9a9a9,#999 50%,#a4a4a4);border-left:1px solid #4e4e4e;box-sizing:border-box"></div>
<div class="abs" style="left:1026.5px;top:1001.5px;width:50.8px;height:20.8px;background:linear-gradient(#a9a9a9,#999 50%,#a4a4a4);border-left:1px solid #4e4e4e;box-sizing:border-box"></div>
<div class="abs" style="left:1077.3px;top:1001.5px;width:22.2px;height:20.8px;background:linear-gradient(#a9a9a9,#999 50%,#a4a4a4);border-left:1px solid #4e4e4e;box-sizing:border-box"></div>
<div class="abs" style="left:1099.5px;top:1001.5px;width:21.9px;height:20.8px;background:linear-gradient(#a9a9a9,#999 50%,#a4a4a4);border-left:1px solid #4e4e4e;box-sizing:border-box"></div>
<div class="abs" style="left:1127.7px;top:1001.5px;width:21.8px;height:20.8px;background:linear-gradient(#a9a9a9,#999 50%,#a4a4a4);border-left:1px solid #4e4e4e;box-sizing:border-box"></div>
<div class="abs" style="left:1149.5px;top:1001.5px;width:21.9px;height:20.8px;background:linear-gradient(#a9a9a9,#999 50%,#a4a4a4);border-left:1px solid #4e4e4e;box-sizing:border-box"></div>
<div class="abs" style="left:1171.4px;top:1001.5px;width:21.9px;height:20.8px;background:linear-gradient(#a9a9a9,#999 50%,#a4a4a4);border-left:1px solid #4e4e4e;box-sizing:border-box"></div>
<div class="abs" style="left:1244.8px;top:1001.5px;width:11.7px;height:20.8px;background:linear-gradient(#a9a9a9,#999 50%,#a4a4a4);border-left:1px solid #4e4e4e;box-sizing:border-box"></div>
<div class="abs" style="left:1256.5px;top:1001.5px;width:21.5px;height:20.8px;background:linear-gradient(#a9a9a9,#999 50%,#a4a4a4);border-left:1px solid #4e4e4e;box-sizing:border-box"></div>
<div class="abs" style="left:1193.3px;top:1001.5px;width:51.5px;height:20.8px;background:linear-gradient(#6a6a6a,#858585);border:1px solid #4a4a4a;box-sizing:border-box"></div>
<div class="abs" style="left:1195.5px;top:1003.5px;width:47px;height:16.8px;background:#8e8e8e"></div>
<div class="abs" style="left:1014.8px;top:1001.5px;width:1px;height:20.8px;background:#4e4e4e"></div>
<div class="abs" style="left:1121.4px;top:1001.5px;width:1px;height:20.8px;background:#4e4e4e"></div>
<div class="abs" style="left:1278px;top:1001.5px;width:2px;height:20.8px;background:#4e4e4e"></div>
<div class="abs" style="left:921.5px;top:1003px;height:20px;line-height:20px;font-size:12px;color:#111;white-space:nowrap;letter-spacing:-1.402px;">MODELO</div>
<div class="abs" style="left:1047.5px;top:1003px;height:20px;line-height:20px;font-size:12px;color:#222;white-space:nowrap;letter-spacing:-0.591px;">1:1</div>
<svg class="abs" style="left:970px;top:1001.8px" width="310" height="21" viewBox="970 1001 310 21"><g fill="none" stroke="#1a1a1a" stroke-width="1.1"><rect x="976" y="1004.5" width="10.5" height="10.5" fill="#f4f4f4"/><path d="M978 1013.5v-7l6 7z" fill="#ddd" stroke-width="1"/><path d="M974 1018.5h14" stroke="#444" stroke-width="1.5"/><rect x="996" y="1005" width="6.5" height="7" fill="#eee" stroke="#444"/><rect x="1004" y="1005" width="6.5" height="7" fill="#eee" stroke="#444"/><path d="M996 1015.5h15" stroke="#444" stroke-width="1.8"/><path d="M1036.5 1004.5l2 6.5 4 6.5h-3l-3-4-3 4h-3l4-6.5z" fill="#f4f4f4" stroke="#555" stroke-width=".9"/><path d="M1066 1009h8l-4 4.5z" fill="#111" stroke="none"/><path d="M1085.5 1004.5l2 6.5 4 6.5h-3l-3-4-3 4h-3l4-6.5z" fill="#f4f4f4" stroke="#555" stroke-width=".9"/><circle cx="1092.5" cy="1012.5" r="2.8" fill="#ffd34d" stroke="#e8a21a" stroke-width=".8"/><rect x="1091.5" y="1015" width="2" height="3" fill="#eee" stroke="none"/><path d="M1109.5 1004.5l2 6.5 4 6.5h-3l-3-4-3 4h-3l4-6.5z" fill="#b4b4b4" stroke="#8a8a8a" stroke-width=".9"/><path d="M1113 1012l4 5" stroke="#8a8a8a"/><path d="M1138.5 1003.8l1.3.2.5 1.9 1.3.6 1.7-1 1.4 1.4-1 1.7.6 1.3 1.9.5v2l-1.9.5-.6 1.3 1 1.7-1.4 1.4-1.7-1-1.3.6-.5 1.9h-2l-.5-1.9-1.3-.6-1.7 1-1.4-1.4 1-1.7-.6-1.3-1.9-.5v-2l1.9-.5.6-1.3-1-1.7 1.4-1.4 1.7 1 1.3-.6.5-1.9z" fill="#f0f0f0" stroke="#222" stroke-width="1"/><circle cx="1138.5" cy="1011.4" r="2.7" fill="#9a9a9a" stroke="#222" stroke-width="1"/><path d="M1146 1019.5v-4.5l-4.5 4.5z" fill="#111" stroke="#fff" stroke-width=".5"/><rect x="1153.5" y="1011" width="10" height="8" fill="#f2f2f2" stroke="#222"/><path d="M1159 1011v-3a3.5 3.5 0 0 1 7 0v2.5" stroke="#222" stroke-width="1.6"/><path d="M1159 1011v-3a3.5 3.5 0 0 1 7 0v2.5" stroke="#eee" stroke-width=".6"/><path d="M1158.5 1013.5v3" stroke="#222" stroke-width="1.4"/><rect x="1175.5" y="1006" width="11" height="8" fill="#9fb0c0" stroke="#445"/><path d="M1177.5 1004v2M1181 1004v2M1184.5 1004v2M1177.5 1014v2M1181 1014v2" stroke="#445"/><circle cx="1187" cy="1012" r="2.8" fill="#ffb84d" stroke="#e8861a" stroke-width=".8"/><rect x="1186" y="1015" width="2" height="3.5" fill="#f4f4f4" stroke="none"/><path d="M1200 1005h8l3 3v10h-11z" fill="#3b6fc4" stroke="#224a90" stroke-width=".8"/><rect x="1200" y="1012" width="9" height="6" fill="#f2c230" stroke="none"/><circle cx="1203" cy="1007.5" r="1.5" fill="#fff" stroke="none"/><path d="M1204.5 1016l2.5 2.5 5-5.5" stroke="#2fa62f" stroke-width="2"/><path d="M1227.5 1004.5c3.5 0 5 3 4 5.5l-2 4h-4l-2-4c-1-2.5.5-5.5 4-5.5z" fill="#fff3b0" stroke="#e2c85a" stroke-width=".8"/><rect x="1226" y="1014.5" width="3" height="4.5" fill="#f4f4f4" stroke="#bbb" stroke-width=".5"/><path d="M1248 1010.5h5.5l-2.75 4z" fill="#111" stroke="none"/><rect x="1260.5" y="1004.5" width="13.5" height="13.5" fill="#f4f4f4" stroke="#222" stroke-width="1.2"/><path d="M1260.5 1007h13.5" stroke="#222" stroke-width="2"/></g></svg>
</body></html>
